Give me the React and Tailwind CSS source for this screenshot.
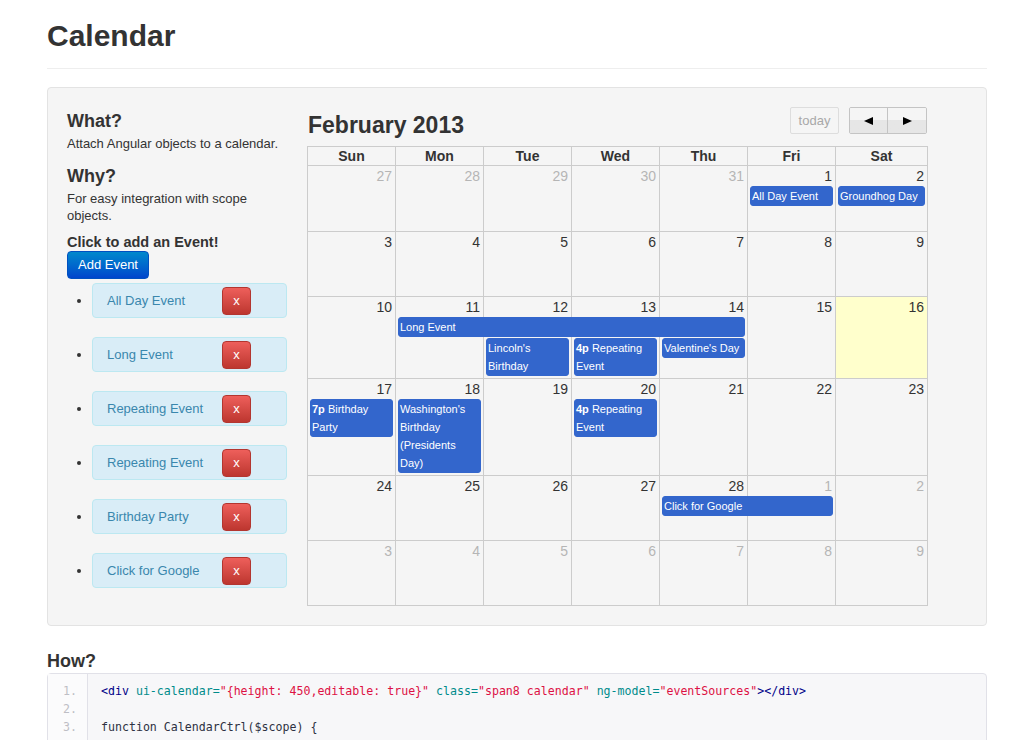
import React from "react";

const FONT = { fontFamily: '"Liberation Sans", Arial, sans-serif' };
const MONO = { fontFamily: '"DejaVu Sans Mono", "Liberation Mono", monospace' };

const days = ["Sun", "Mon", "Tue", "Wed", "Thu", "Fri", "Sat"];

const colStart = [
    "col-start-1",
    "col-start-2",
    "col-start-3",
    "col-start-4",
    "col-start-5",
    "col-start-6",
    "col-start-7",
];

const listEvents = [
    "All Day Event",
    "Long Event",
    "Repeating Event",
    "Repeating Event",
    "Birthday Party",
    "Click for Google",
];

// each week: [number, isOtherMonth], events placed by grid classes
const weeks = [
    {
        first: true,
        days: [[27, true], [28, true], [29, true], [30, true], [31, true], [1], [2]],
        events: [
            { title: "All Day Event", cls: "col-start-6 col-end-7 row-start-2" },
            { title: "Groundhog Day", cls: "col-start-7 col-end-8 row-start-2" },
        ],
    },
    {
        days: [[3], [4], [5], [6], [7], [8], [9]],
        events: [],
    },
    {
        days: [[10], [11], [12], [13], [14], [15], [16]],
        today: 6,
        events: [
            { title: "Long Event", cls: "col-start-2 col-end-6 row-start-2" },
            { title: "Lincoln's Birthday", cls: "col-start-3 col-end-4 row-start-3" },
            { time: "4p", title: "Repeating Event", cls: "col-start-4 col-end-5 row-start-3" },
            { title: "Valentine's Day", cls: "col-start-5 col-end-6 row-start-3 self-start" },
        ],
    },
    {
        days: [[17], [18], [19], [20], [21], [22], [23]],
        events: [
            { time: "7p", title: "Birthday Party", cls: "col-start-1 col-end-2 row-start-2 self-start" },
            { title: "Washington's Birthday (Presidents Day)", cls: "col-start-2 col-end-3 row-start-2" },
            { time: "4p", title: "Repeating Event", cls: "col-start-4 col-end-5 row-start-2 self-start" },
        ],
    },
    {
        days: [[24], [25], [26], [27], [28], [1, true], [2, true]],
        events: [{ title: "Click for Google", cls: "col-start-5 col-end-7 row-start-2" }],
    },
    {
        days: [[3, true], [4, true], [5, true], [6, true], [7, true], [8, true], [9, true]],
        events: [],
    },
];

const Week = ({ week }) => {
    return (
        <div className={`grid grid-cols-[88px_88px_88px_88px_88px_88px_92px] grid-rows-[20px_auto_auto_minmax(2px,1fr)] ${week.first ? "min-h-[66px]" : "min-h-[65px]"}`}>
            {week.days.map((d, i) => (
                <div
                    key={"bg" + i}
                    className={`${colStart[i]} row-span-full border-r border-b border-[#cccccc] ${week.today === i ? "bg-[#ffffcc]" : ""}`}
                />
            ))}
            {week.days.map((d, i) => (
                <div
                    key={"n" + i}
                    className={`${colStart[i]} row-start-1 text-right pr-[4px] text-[14px] leading-[20px] ${d[1] ? "text-[#b5b5b5]" : "text-[#333333]"}`}
                >
                    {d[0]}
                </div>
            ))}
            {week.events.map((e, i) => (
                <div
                    key={"e" + i}
                    className={`${e.cls} ml-[2px] mr-[3px] mb-px bg-[#3366cc] border border-[#3366cc] rounded-[3px] px-px text-white text-[11px] leading-[18px]`}
                >
                    {e.time ? <b>{e.time} </b> : null}
                    {e.title}
                </div>
            ))}
        </div>
    );
};

const App = () => {
    return (
        <div className="bg-white min-h-[740px] text-[#333333]" style={FONT}>
            <div className="ml-[47px] w-[940px]">
                <h1 className="text-[30px] leading-[36px] font-bold pt-[18px] pb-[14px] border-b border-[#eeeeee]">
                    Calendar
                </h1>

                <div className="mt-[18px] bg-[#f5f5f5] border border-[#e3e3e3] rounded-[4px] p-[19px] flex gap-[20px]">
                    {/* left column */}
                    <div className="w-[220px] pt-[4px]">
                        <h4 className="text-[18px] leading-[20px] font-bold">What?</h4>
                        <p className="text-[13px] leading-[17px] mt-[4px]">Attach Angular objects to a calendar.</p>
                        <h4 className="text-[18px] leading-[20px] font-bold mt-[14px]">Why?</h4>
                        <p className="text-[13px] leading-[17px] mt-[4px]">For easy integration with scope objects.</p>
                        <p className="text-[14.5px] leading-[17px] font-bold mt-[10px]">Click to add an Event!</p>
                        <button className="h-[28px] px-[10px] text-[13px] text-white rounded-[4px] border border-[#0050c0] bg-gradient-to-b from-[#0088cc] to-[#0044cc]">
                            Add Event
                        </button>
                        <ul className="list-disc ml-[25px] mt-[4px] flex flex-col gap-[19px]">
                            {listEvents.map((name, i) => (
                                <li key={i} className="text-[13px] marker:text-[#333333]">
                                    <div className="h-[35px] flex items-center justify-between bg-[#d9edf7] border border-[#bce8f1] rounded-[4px] pl-[14px] pr-[35px] text-[#3a87ad]">
                                        <span>{name}</span>
                                        <button className="w-[29px] h-[28px] rounded-[4px] bg-gradient-to-b from-[#ee5f5b] to-[#bd362f] border border-[#b33630] text-white text-[13px] leading-[26px]">
                                            x
                                        </button>
                                    </div>
                                </li>
                            ))}
                        </ul>
                    </div>

                    {/* calendar */}
                    <div className="w-[621px]">
                        <div className="h-[39px] flex justify-between items-start">
                            <h2 className="text-[23px] leading-[27px] font-bold pt-[5px] pl-px">February 2013</h2>
                            <div className="flex gap-[10px] mr-px">
                                <div className="w-[49px] h-[27px] border border-[#dddddd] rounded-[2px] bg-[#f5f5f5] flex items-center justify-center text-[13px] text-[#a8a8a8]">
                                    today
                                </div>
                                <div className="flex h-[27px] border border-[#c4c4c4] rounded-[2px] overflow-hidden">
                                    <div className="w-[38px] bg-gradient-to-b from-[#f5f5f5] from-50% to-[#e6e6e6] to-50% border-r border-[#c4c4c4] flex items-center justify-center">
                                        <svg width="9" height="8" viewBox="0 0 9 8"><path d="M0 4 L9 0 L9 8 Z" fill="#000" /></svg>
                                    </div>
                                    <div className="w-[38px] bg-gradient-to-b from-[#f5f5f5] from-50% to-[#e6e6e6] to-50% flex items-center justify-center">
                                        <svg width="9" height="8" viewBox="0 0 9 8"><path d="M9 4 L0 0 L0 8 Z" fill="#000" /></svg>
                                    </div>
                                </div>
                            </div>
                        </div>

                        <div className="border-l border-t border-[#cccccc]">
                            <div className="grid grid-cols-[88px_88px_88px_88px_88px_88px_92px]">
                                {days.map((d) => (
                                    <div key={d} className="h-[19px] border-r border-b border-[#cccccc] text-center text-[14px] leading-[18px] font-bold">
                                        {d}
                                    </div>
                                ))}
                            </div>
                            {weeks.map((w, i) => (
                                <Week key={i} week={w} />
                            ))}
                        </div>
                    </div>
                </div>

                <h4 className="text-[18px] leading-[20px] font-bold mt-[25px]">How?</h4>
                <div className="mt-[2px] flex bg-[#f7f7f9] border border-[#e1e1e8] rounded-[4px] text-[11.6px] leading-[18px] pt-[8px] pb-[10px]" style={MONO}>
                    <div className="w-[40px] border-r border-[#e1e1e8] text-right pr-[10px] text-[#bebec5] -mt-[8px] pt-[8px] -mb-[10px] pb-[10px] bg-[#fbfbfc]">
                        <div>1.</div>
                        <div>2.</div>
                        <div>3.</div>
                    </div>
                    <div className="pl-[13px] whitespace-pre">
                        <div>
                            <span className="text-[#000088]">&lt;div</span>{" "}
                            <span className="text-[#008b8b]">ui-calendar=</span>
                            <span className="text-[#dd1144]">"&#123;height: 450,editable: true&#125;"</span>{" "}
                            <span className="text-[#008b8b]">class=</span>
                            <span className="text-[#dd1144]">"span8 calendar"</span>{" "}
                            <span className="text-[#008b8b]">ng-model=</span>
                            <span className="text-[#dd1144]">"eventSources"</span>
                            <span className="text-[#000088]">&gt;&lt;/div&gt;</span>
                        </div>
                        <div>&nbsp;</div>
                        <div className="text-[#2d3142]">function CalendarCtrl($scope) &#123;</div>
                    </div>
                </div>
            </div>
        </div>
    );
};

export default App;
